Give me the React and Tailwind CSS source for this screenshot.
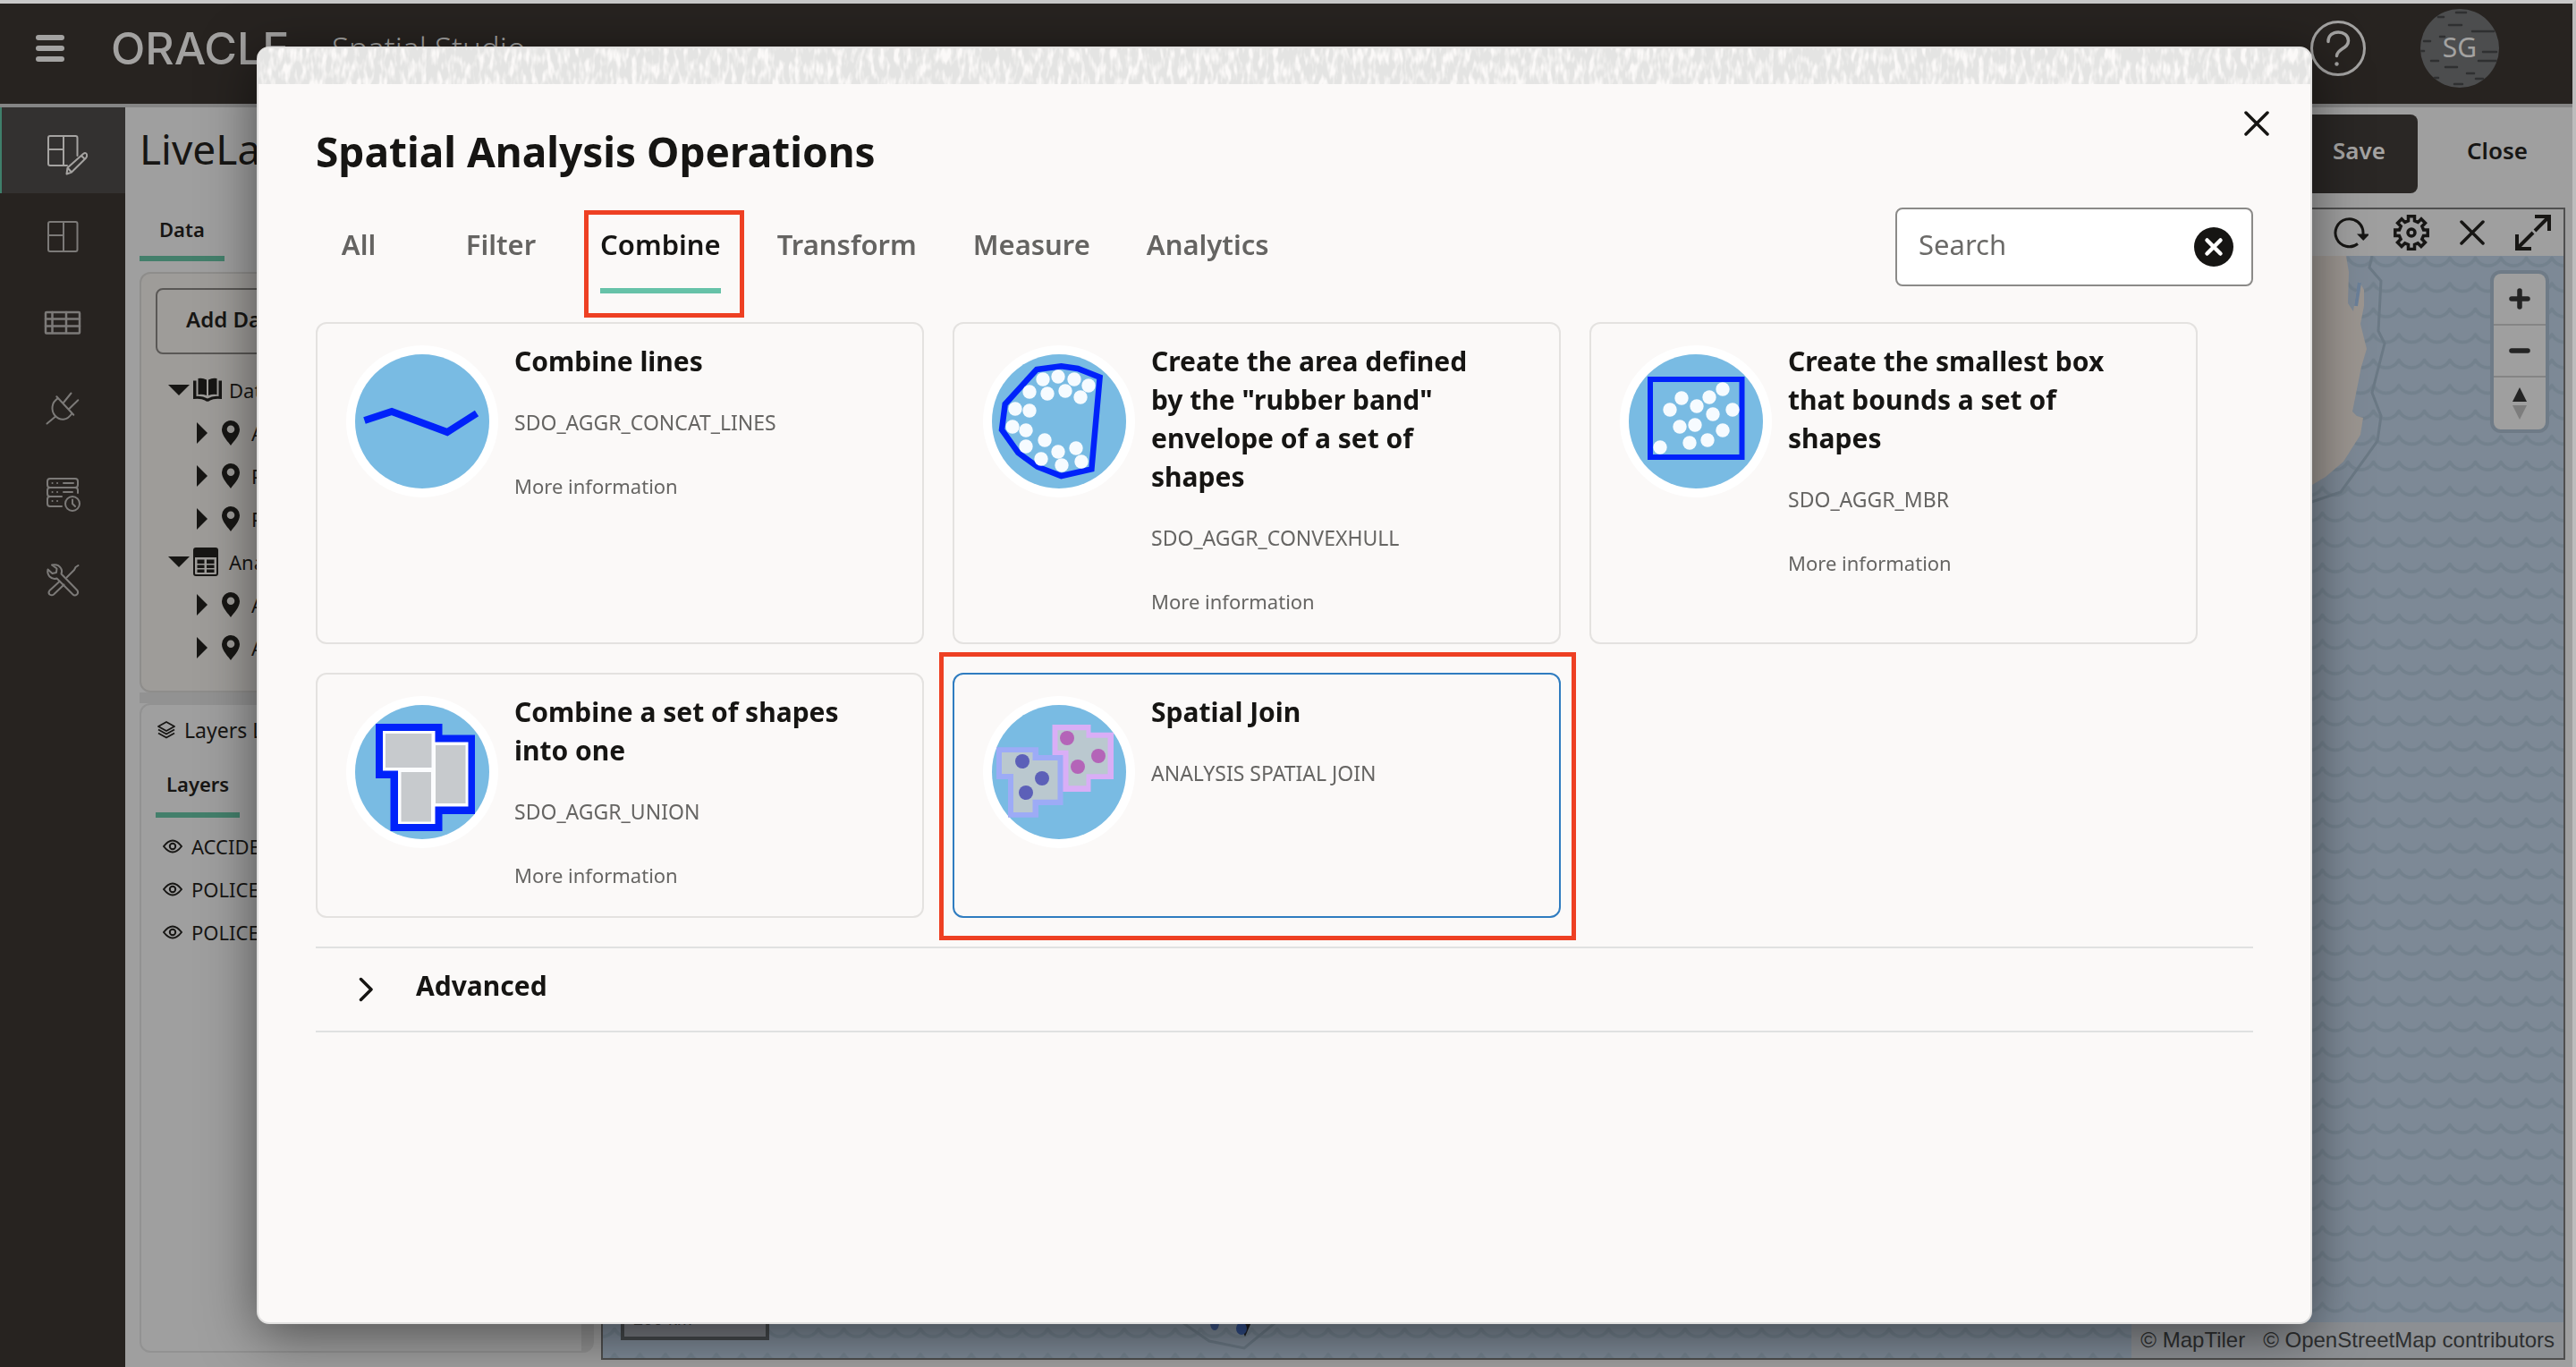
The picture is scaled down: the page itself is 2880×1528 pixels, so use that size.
import React from "react";

const NAV_LINE = {
  fill: "none",
  stroke: "currentColor",
  strokeWidth: 2,
  strokeLinecap: "round",
  strokeLinejoin: "round",
};

/* ---------- sidebar icons ---------- */

function ProjectEditIcon() {
  return (
    <svg className="size-12" viewBox="0 0 48 48" {...NAV_LINE} overflow="visible">
      <path d="M29 41H10a2 2 0 0 1-2-2V10a2 2 0 0 1 2-2h28.500a2 2 0 0 1 2 2v20M25 8v33M8 23h17" />
      <path d="M28.500 50.500l1-7L47 28q3-2 4 0.500 0.600 2-0.800 4L34 48.500zM45 30l3 3M29.500 43.500l4 4.500" />
    </svg>
  );
}

function ProjectsIcon() {
  return (
    <svg className="size-12" viewBox="0 0 48 48" {...NAV_LINE}>
      <rect x="8" y="8" width="32.500" height="33" rx="2" />
      <path d="M25 8v33M8 23h17" />
    </svg>
  );
}

function DatasetsIcon() {
  return (
    <svg className="size-12" viewBox="0 0 48 48" {...NAV_LINE} strokeWidth="2.500">
      <rect x="5" y="13" width="38" height="23.500" rx="1" />
      <path d="M12.500 13v23M28 13v23M5 20.500h38M5 28.500h38" />
    </svg>
  );
}

function ConnectionsIcon() {
  return (
    <svg className="size-12" viewBox="0 0 48 48" {...NAV_LINE}>
      <path d="M6.500 41.500 15.500 34M17.300 11.300 36.300 31.800M19 13.200C11 18 11 27 15.500 32.500 21 38.500 29 38.500 34.500 30M25 18 33.500 7.500M31.300 25 41.300 15.300" />
    </svg>
  );
}

function JobsIcon() {
  return (
    <svg className="size-12" viewBox="0 0 48 48" {...NAV_LINE}>
      <path d="M10 7h28q3 0 3 3v4q0 3-3 3H10q-3 0-3-3v-4q0-3 3-3zM10 17q-3 0-3 3v4q0 3 3 3h13M10 27q-3 0-3 3v5q0 3 3 3h13M38 17q3 0 3 3v3" />
      <path d="M12.500 12h.1M18 12h.1M25 12h11M12.500 22h.1M18 22h.1M25 22h10M12.500 32h.1M18 32h.1" />
      <circle cx="35" cy="35" r="8" />
      <path d="M35 30.500V35l3 3" />
    </svg>
  );
}

function ToolsIcon() {
  return (
    <svg className="size-12" viewBox="0 0 48 48" {...NAV_LINE}>
      <path d="M12 7.500q7-1.500 10 3.500 2 3 .5 6.500L40.500 36q1.500 2.500-.5 4.500-2.500 2-4.500 0L17.500 22.500Q13 24 9.500 20.500 6.500 17 7.500 12.500L12.500 17l4.500-1 .5-4.500z" />
      <path d="M20.500 26 9.500 36q-2 2.500 0 4.500 2.500 1.500 4.500 0L25.500 29.500M28.500 21.500 37 13l1.500-3L41.500 8" />
    </svg>
  );
}

/* ---------- tree and layer icons ---------- */

function CaretDown() {
  return (
    <svg className="h-3 w-6" viewBox="0 0 24 12" fill="currentColor"><path d="M0 0h24L12 12z" /></svg>
  );
}

function CaretRight() {
  return (
    <svg className="h-6 w-3" viewBox="0 0 12 24" fill="currentColor"><path d="M0 0v24l12-12z" /></svg>
  );
}

function PinIcon() {
  return (
    <svg className="h-7 w-5" viewBox="0 0 20 28" fill="currentColor" fillRule="evenodd">
      <path d="M10 0a10 10 0 0 1 10 10c0 7-6.500 13-10 18C6.500 23 0 17 0 10A10 10 0 0 1 10 0zm0 5.500a4.300 4.300 0 1 0 0 8.600 4.300 4.300 0 0 0 0-8.600z" />
    </svg>
  );
}

function BookIcon() {
  return (
    <svg className="h-7 w-8" viewBox="0 0 32 28" fill="currentColor">
      <path d="M5.500 1q5-1 9.500 1.500V20Q10 18 5.500 19zM26.500 1q-5-1-9.500 1.500V20q5-2 9.500-1z" />
      <path d="M0 3.500h3.500V21q6.500-.8 12.500 2.500Q22 20.200 28.500 21V3.500H32V24q-9-1-13 1.500Q16 28 13 25.500 9 23 0 24z" />
    </svg>
  );
}

function AnalysisIcon() {
  return (
    <svg className="h-8 w-7" viewBox="0 0 28 32">
      <rect x="1" y="1" width="26" height="30" rx="2" fill="none" stroke="currentColor" strokeWidth="2" />
      <path fill="currentColor" d="M1 1h26v10H1zM4.500 13.500h8V18h-8zM15 13.500h8.500V18H15zM4.500 19.500h8v3.500h-8zM15 19.500h8.500v3.500H15zM4.500 24.500h8V28h-8zM15 24.500h8.500V28H15z" />
    </svg>
  );
}

function LayersIcon() {
  return (
    <svg className="size-5" viewBox="0 0 20 20" fill="none" stroke="currentColor" strokeWidth="1.800" strokeLinejoin="round">
      <path d="M10 1 19 6l-9 5-9-5zM1 9.500l9 5 9-5M1 13.500l9 5 9-5" />
    </svg>
  );
}

function EyeIcon() {
  return (
    <svg className="h-4 w-[22px]" viewBox="0 0 22 16" fill="none" stroke="currentColor" strokeWidth="2">
      <path d="M1 8q10-13 20 0-10 13-20 0z" strokeLinejoin="round" />
      <circle cx="11" cy="8" r="3.200" />
    </svg>
  );
}

/* ---------- map toolbar icons ---------- */

function RefreshIcon() {
  return (
    <svg className="size-10" viewBox="0 0 40 40" fill="none" stroke="currentColor" strokeWidth="3">
      <path d="M28 32.500A15.500 15.500 0 1 1 34 20v5" />
      <path d="M27 21.500h14.500L34.200 29z" fill="currentColor" stroke="none" />
    </svg>
  );
}

function GearIcon() {
  return (
    <svg className="size-10" viewBox="0 0 40 40" fill="none" stroke="currentColor" strokeWidth="3.500">
      <path d="M16.500 1.800h7v5l3.800 1.600 3.700-3.600 4.500 4.500-3.600 3.700 1.700 3.900h4.600v6.500h-4.700l-1.700 3.900 3.600 3.700-4.500 4.500-3.700-3.600-3.700 1.600v5h-7v-5l-3.800-1.600L9 35.500 4.500 31l3.600-3.700-1.700-3.900H1.800v-6.500h4.700L8.200 13 4.600 9.300 9.100 4.800l3.700 3.600 3.700-1.600z" />
      <circle cx="20" cy="20" r="4" />
    </svg>
  );
}

function CrossIcon({ className }) {
  return (
    <svg className={className} viewBox="0 0 28 28" fill="none" stroke="currentColor" strokeWidth="3.500" strokeLinecap="round">
      <path d="M2 2l24 24M26 2 2 26" />
    </svg>
  );
}

function ExpandIcon() {
  return (
    <svg className="size-10" viewBox="0 0 40 40" fill="none" stroke="currentColor" strokeWidth="4">
      <path d="M22 2h16v16M38 2 22 18M18 38H2V22M2 38l18-18" />
    </svg>
  );
}

/* ---------- operation pictograms ---------- */

const BLUE = "#0022fa";

function Badge({ children }) {
  return (
    <svg className="mt-1 size-[170px] shrink-0" viewBox="-10 -10 170 170" aria-hidden="true">
      <circle cx="75" cy="75" r="85" fill="#ffffff" />
      <circle cx="75" cy="75" r="75" fill="#79bbe3" />
      {children}
    </svg>
  );
}

function Dots({ points, r, fill }) {
  return points.map(([x, y]) => <circle key={x + "-" + y} cx={x} cy={y} r={r} fill={fill} />);
}

const HULL_DOTS = [[57, 28], [74, 25], [92, 28], [108, 35], [42, 42], [62, 44], [82, 41], [99, 48], [26, 61], [42, 63], [23, 81], [38, 85], [38, 103], [59, 96], [74, 109], [94, 105], [55, 117], [78, 124], [100, 120]];
const BOX_DOTS = [[59, 49], [46, 62], [76, 58], [90, 48], [105, 39], [94, 67], [116, 62], [57, 81], [74, 79], [105, 85], [35, 104], [68, 99], [88, 96]];

const LinesBadge = () => (
  <Badge>
    <path d="M10.500 74 41 64l62 23 33-21" fill="none" stroke={BLUE} strokeWidth="8" />
  </Badge>
);

const HullBadge = () => (
  <Badge>
    <path d="M50 17 77.500 13.300 96 16l24.600 9.700-9.200 102.600L77.500 136l-26.700-10.300L29.300 110 11 84.300l3.700-28.600z" fill="none" stroke={BLUE} strokeWidth="6.500" />
    <Dots points={HULL_DOTS} r={7.7} fill="#f6fbff" />
  </Badge>
);

const BoxBadge = () => (
  <Badge>
    <rect x="24" y="28" width="102.500" height="87" fill="none" stroke={BLUE} strokeWidth="6" />
    <Dots points={BOX_DOTS} r={7.7} fill="#f6fbff" />
  </Badge>
);

const UnionBadge = () => (
  <Badge>
    <path d="M23 21h74.500v12.500H134V122H97.500v19h-58V82H23z" fill={BLUE} />
    <path d="M31 29h58.500v12.500h37v72h-37V133H48V73.500H31z" fill="#fbfcfe" />
    <path d="M34 32h51.500v38H34zM90 45h33.500v65H90zM51.500 75H85v55.500H51.500z" fill="#c7cacd" />
  </Badge>
);

const JoinBadge = () => (
  <Badge>
    <path d="M67.500 22h43v8.700H136V83h-25.500v14H79V56H67.500z" fill="#d9aef6" />
    <path d="M73.500 28.300h32v8.400h24v40.600h-24v13h-20V50.700h-12z" fill="#bac8cf" />
    <path d="M5 47.300h47V56h27.500v56H52v13.700H18V83H5z" fill="#9dabf6" />
    <path d="M11 53h34.500v9h28v43.700h-28V120H24V77H11z" fill="#bac8cf" />
    <Dots points={[[84, 37], [119, 57], [96, 69]]} r={8} fill="#b464b8" />
    <Dots points={[[34, 63], [56, 82], [38, 98]]} r={8} fill="#5c60b8" />
  </Badge>
);

/* ---------- data ---------- */

const NAV = [
  { label: "Active project", Icon: ProjectEditIcon, active: true },
  { label: "Projects", Icon: ProjectsIcon },
  { label: "Datasets", Icon: DatasetsIcon },
  { label: "Connections", Icon: ConnectionsIcon },
  { label: "Jobs", Icon: JobsIcon },
  { label: "Administration", Icon: ToolsIcon },
];

const TREE = [
  { text: "Datasets", Icon: BookIcon, children: ["ACCIDENTS", "POLICE_BOUNDS", "POLICE_POINTS"] },
  { text: "Analyses", Icon: AnalysisIcon, children: ["ACCIDENTS JOIN", "ACCIDENTS WITHIN"] },
];

const LAYERS = ["ACCIDENTS", "POLICE_POINTS", "POLICE_BOUNDS"];

const TABS = ["All", "Filter", "Combine", "Transform", "Measure", "Analytics"];

const OPERATIONS = [
  { title: "Combine lines", code: "SDO_AGGR_CONCAT_LINES", more: true, Pic: LinesBadge },
  { title: 'Create the area defined by the "rubber band" envelope of a set of shapes', code: "SDO_AGGR_CONVEXHULL", more: true, Pic: HullBadge },
  { title: "Create the smallest box that bounds a set of shapes", code: "SDO_AGGR_MBR", more: true, Pic: BoxBadge },
  { title: "Combine a set of shapes into one", code: "SDO_AGGR_UNION", more: true, Pic: UnionBadge },
  { title: "Spatial Join", code: "ANALYSIS SPATIAL JOIN", selected: true, Pic: JoinBadge },
];

/* ---------- page behind the dialog ---------- */

function Header() {
  return (
    <header className="flex h-[112px] items-center bg-[#272320] pr-[82px] pb-3 pl-10 text-[#a3a2a1]">
      <button aria-label="Menu" className="flex w-8 flex-col gap-1.5">
        <span className="h-1.5 rounded-full bg-current" />
        <span className="h-1.5 rounded-full bg-current" />
        <span className="h-1.5 rounded-full bg-current" />
      </button>
      <div className="flex flex-1 items-center pl-[52px] whitespace-nowrap">
        <span className="w-[247px] font-['Inter',sans-serif] text-[50px] leading-[56px] font-medium">ORACLE</span>
        <span className="text-[35px] leading-[56px] font-light">Spatial Studio</span>
      </div>
      <button aria-label="Help" className="mr-[61px] size-[62px]">
        <svg viewBox="0 0 62 62" fill="none" stroke="currentColor" strokeWidth="3" strokeLinecap="round">
          <circle cx="31" cy="31" r="29.500" />
          <path d="M20 23.500C20 9 42.500 10 42.500 22.500 42.500 32 30 31 29.500 39.500" strokeWidth="3.500" />
          <circle cx="29.500" cy="48.500" r="2.200" fill="currentColor" stroke="none" />
        </svg>
      </button>
      <button className="relative flex size-[88px] items-center justify-center overflow-hidden rounded-full bg-[#4c4d4e] text-[30px]">
        <svg className="absolute inset-0 size-full" viewBox="0 0 88 88" fill="none" stroke="#2f3031" strokeWidth="2.500" strokeLinecap="round">
          <path d="M40 4h11M20 9h6M32 18h14M58 25h24M22 31h5M4 36h7M70 48h15M1 47h3M12 58h8M65 58h20M28 65h13M52 72h8M62 78h8M16 77h4M38 84h9" />
        </svg>
        <span className="relative pb-1">SG</span>
      </button>
    </header>
  );
}

function Sidebar() {
  return (
    <nav className="flex w-[140px] shrink-0 flex-col bg-[#272320]">
      {NAV.map(({ label, Icon, active }) => (
        <button
          key={label}
          aria-label={label}
          className={
            active
              ? "flex h-24 items-center justify-center border-l-2 border-[#3f7f6b] bg-[#333130] pr-0.5 text-[#a5a3a1]"
              : "flex h-24 items-center justify-center text-[#7c7a78]"
          }
        >
          <Icon />
        </button>
      ))}
    </nav>
  );
}

function LeftPanels() {
  return (
    <div className="flex w-[508px] shrink-0 flex-col text-[22px] leading-[48px] text-[#171614]">
      <div className="flex">
        <button className="h-[60px] border-b-6 border-[#437f6b] px-[22px] pb-2.5 font-semibold">Data</button>
      </div>
      <div className="mt-3 flex h-[470px] flex-col rounded-xl border-2 border-[#8e8d8b] bg-[#9e9c99] p-4">
        <button className="h-[74px] w-56 shrink-0 rounded-lg border-2 border-[#5a5856] px-8 pb-1 text-left text-[24px] font-semibold">
          Add Dataset
        </button>
        <ul className="mt-4">
          {TREE.map(({ text, Icon, children }) => (
            <li key={text}>
              <div className="flex h-12 items-center pl-3.5">
                <span className="w-7"><CaretDown /></span>
                <span className="w-10"><Icon /></span>
                {text}
              </div>
              <ul>
                {children.map((child) => (
                  <li key={child} className="flex h-12 items-center pl-[46px]">
                    <span className="w-7"><CaretRight /></span>
                    <span className="w-[33px]"><PinIcon /></span>
                    {child}
                  </li>
                ))}
              </ul>
            </li>
          ))}
        </ul>
      </div>
      <div className="h-3 bg-[#929292]" />
      <div className="mb-2 flex flex-1 flex-col rounded-xl border-2 border-r-14 border-[#929292] bg-[#9f9f9f] px-4 pt-1">
        <div className="flex items-center gap-2.5 pl-0.5 text-[23px]">
          <LayersIcon />
          Layers List
        </div>
        <div className="flex pt-3">
          <button className="border-b-6 border-[#437f6b] px-3 pb-2 font-semibold">Layers</button>
        </div>
        <ul className="pt-2">
          {LAYERS.map((name) => (
            <li key={name} className="flex h-12 items-center gap-2.5 pl-2">
              <EyeIcon />
              {name}
            </li>
          ))}
        </ul>
      </div>
    </div>
  );
}

function MapPanel() {
  return (
    <section className="flex min-w-0 flex-1 flex-col border-2 border-[#4f4f4f] text-[#171614]">
      <div className="flex h-[52px] shrink-0 items-center justify-end gap-7 pr-3.5">
        <button aria-label="Refresh"><RefreshIcon /></button>
        <button aria-label="Settings"><GearIcon /></button>
        <button aria-label="Remove" className="flex size-10 items-center justify-center"><CrossIcon className="size-7" /></button>
        <button aria-label="Expand"><ExpandIcon /></button>
      </div>
      <div className="relative flex-1 bg-[#7d8996]">
        <svg className="absolute inset-0 size-full" aria-hidden="true">
          <defs>
            <pattern id="waves" width="28.500" height="28.500" patternUnits="userSpaceOnUse" patternTransform="translate(13 0)">
              <path d="M-2 2Q0 2 1 4 6 11 14.250 11T27.500 4q1-2 3-2" fill="none" stroke="#73818d" strokeWidth="4" strokeLinejoin="round" />
            </pattern>
          </defs>
          <rect width="100%" height="100%" fill="url(#waves)" />
          <g transform="translate(-674 -286)">
            <path d="M2500 286h123l3 18-1 35 6 9 3-20 4-13 5 9v18l-4 20 7 28-6 20-10 50 5 5 7 2-3 19-19 30-20 17-15 9h-85z" fill="#9b9590" />
            <path d="M2634 342l4-26" stroke="#6b8099" strokeWidth="4" />
            <path d="M2652 286l-3 13 13 15-3 56 7 14-14 55 10 26-4 28-41 57-50 17M1310 1470l42 29 39 8 45-37" fill="none" stroke="#6b7985" strokeWidth="3" />
            <ellipse cx="1358" cy="1479" rx="5" ry="8" fill="#3b5283" />
            <path d="M1385 1478h14l-7 16z" fill="#1c1d20" />
            <ellipse cx="1388" cy="1485" rx="6" ry="7" fill="#2f4b86" />
          </g>
        </svg>
        <div className="absolute bottom-5 left-5 w-[166px] border-4 border-t-0 border-[#44484b] bg-[#777a80] pb-2 pl-2.5 font-['Liberation_Sans',sans-serif] text-[20px] leading-6 text-[#303235]">
          200 km
        </div>
        <div className="absolute top-5 right-5 flex w-[58px] flex-col divide-y-2 divide-[#858585] rounded-lg bg-[#9f9f9f] ring-4 ring-[#6f7b87]">
          <button aria-label="Zoom in" className="flex h-[58px] items-center justify-center">
            <svg className="size-6" viewBox="0 0 24 24" stroke="#242424" strokeWidth="5.500" strokeLinecap="round"><path d="M12 3v18M3 12h18" /></svg>
          </button>
          <button aria-label="Zoom out" className="flex h-[58px] items-center justify-center">
            <svg className="size-6" viewBox="0 0 24 24" stroke="#242424" strokeWidth="5.500" strokeLinecap="round"><path d="M3 12h18" /></svg>
          </button>
          <button aria-label="Reset north" className="flex h-[58px] items-center justify-center">
            <svg className="h-9 w-4" viewBox="0 0 16 36"><path d="M0 16 8 0l8 16z" fill="#242424" /><path d="M0 20l8 16 8-16z" fill="#7d7d7d" /></svg>
          </button>
        </div>
        <div className="absolute right-0 bottom-0 flex gap-5 bg-[#8c8f93] px-2.5 font-['Liberation_Sans',sans-serif] text-[24px] leading-10 whitespace-nowrap text-[#2e2f30]">
          <a href="#maptiler">© MapTiler</a>
          <a href="#osm">© OpenStreetMap contributors</a>
        </div>
      </div>
    </section>
  );
}

function Workspace() {
  return (
    <main className="flex min-w-0 flex-1 flex-col bg-[#9f9f9f] pr-2 pb-2 pl-4 text-[#171614]">
      <div className="flex h-[112px] shrink-0 items-start pt-2">
        <h1 className="flex-1 text-[46px] leading-[76px] whitespace-nowrap">LiveLabs</h1>
        <button className="h-[88px] rounded-lg bg-[#2a2725] px-9 pb-2 text-[26px] font-semibold text-[#a5a4a3]">Save</button>
        <button className="h-[88px] px-[42px] pb-2 pl-[55px] text-[26px] font-semibold">Close</button>
      </div>
      <div className="flex flex-1 gap-2">
        <LeftPanels />
        <MapPanel />
      </div>
    </main>
  );
}

/* ---------- dialog ---------- */

function TextureBand() {
  return (
    <svg className="block h-10 w-full" aria-hidden="true">
      <filter id="grain" x="0" y="0" width="100%" height="100%" colorInterpolationFilters="sRGB">
        <feTurbulence type="fractalNoise" baseFrequency="0.17 0.06" numOctaves="2" seed="8" />
        <feColorMatrix values="0 0 0 0 0.895  0 0 0 0 0.895  0 0 0 0 0.890  3.500 0 0 0 -1" />
      </filter>
      <rect width="100%" height="100%" filter="url(#grain)" />
    </svg>
  );
}

function Tab({ label }) {
  const current = label === "Combine";
  return (
    <button
      role="tab"
      aria-selected={current}
      className={
        current
          ? "relative border-b-6 border-[#66c2a8] pt-[21px] pb-[29px] text-[#161513]"
          : "min-w-24 border-b-6 border-transparent pt-[21px] pb-[29px] text-[#656462]"
      }
    >
      {label}
      {current && <span className="absolute top-[3px] -right-[26px] -bottom-[33px] -left-[18px] border-5 border-[#ee4023]" />}
    </button>
  );
}

function OperationCard({ title, code, more, selected, Pic }) {
  return (
    <article
      className={
        selected
          ? "relative flex gap-[18px] rounded-xl border-2 border-[#2f7cc0] pt-5 pr-20 pb-[30px] pl-8"
          : "flex gap-[18px] rounded-xl border-2 border-[#e4e2e0] pt-5 pr-20 pb-[30px] pl-8"
      }
    >
      <Pic />
      <div className="min-w-0 text-[22px] leading-8 text-[#666563]">
        <h3 className="text-[30px] leading-[43px] font-bold text-[#161513]">{title}</h3>
        <p className="mt-[31px] text-[23px]">{code}</p>
        {more && <a href="#more" className="mt-[39px] block">More information</a>}
      </div>
      {selected && <span className="absolute -top-[25px] -right-[19px] -bottom-[27px] -left-[17px] border-5 border-[#ee4023]" />}
    </article>
  );
}

function OperationsDialog() {
  return (
    <div
      role="dialog"
      aria-labelledby="dialog-title"
      className="relative flex-1 overflow-hidden rounded-[14px] border-2 border-[#e2e1e0] bg-[#fbf9f8] text-[#161513] shadow-[0_12px_60px_rgba(0,0,0,0.5)]"
    >
      <TextureBand />
      <button aria-label="Close dialog" className="absolute top-14 right-8 flex size-14 items-center justify-center">
        <CrossIcon className="size-7" />
      </button>
      <div className="px-16 pt-[45px]">
        <h2 id="dialog-title" className="text-[46px] leading-[60px] font-bold">Spatial Analysis Operations</h2>
        <div className="mt-[33px] flex items-start justify-between">
          <div role="tablist" className="flex gap-[63px] text-[31px] leading-10 font-semibold">
            {TABS.map((label) => <Tab key={label} label={label} />)}
          </div>
          <div className="flex h-[88px] w-[400px] items-center rounded-lg border-2 border-[#8b8a88] bg-white pr-5 pl-6">
            <input
              aria-label="Search"
              placeholder="Search"
              className="min-w-0 flex-1 pb-1.5 text-[31px] leading-10 outline-none placeholder:text-[#6b6a68]"
            />
            <button aria-label="Clear search" className="size-11">
              <svg viewBox="0 0 44 44"><circle cx="22" cy="22" r="22" fill="#161513" /><path d="M14.500 14.500l15 15M29.500 14.500l-15 15" stroke="#fff" strokeWidth="4.500" strokeLinecap="round" /></svg>
            </button>
          </div>
        </div>
        <div className="mt-8 grid grid-cols-3 gap-8 pr-[62px]">
          {OPERATIONS.map((op) => <OperationCard key={op.title} {...op} />)}
        </div>
        <button aria-expanded="false" className="mt-8 flex h-24 w-full items-center gap-12 border-y-2 border-[#e0e1e1] pl-12 text-left">
          <svg className="h-7 w-4" viewBox="0 0 16 28" fill="none" stroke="currentColor" strokeWidth="3.500" strokeLinecap="round" strokeLinejoin="round"><path d="M2.500 2.500 14 14 2.500 25.500" /></svg>
          <span className="mb-2 text-[30px] leading-10 font-bold">Advanced</span>
        </button>
      </div>
    </div>
  );
}

export default function App() {
  return (
    <div className="flex min-h-screen flex-col border-t-4 border-r-4 border-t-[#c9c9c9] border-r-[#bcbcbc] bg-[#9f9f9f] font-['Noto_Sans',sans-serif]">
      <Header />
      <div className="h-1 bg-[#858585]" />
      <div className="flex flex-1">
        <Sidebar />
        <Workspace />
      </div>
      <div className="fixed inset-0 flex pt-[52px] pr-[295px] pb-12 pl-[287px]">
        <OperationsDialog />
      </div>
    </div>
  );
}
